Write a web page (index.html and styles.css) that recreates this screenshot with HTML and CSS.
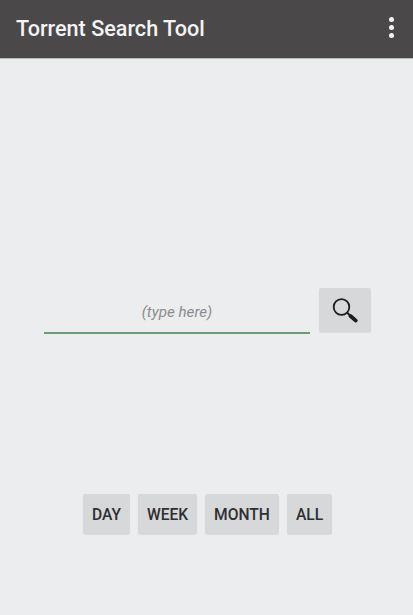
FILE: index.html
```html
<!DOCTYPE html>
<html lang="en">
<head>
    <meta charset="UTF-8" />
    <meta name="viewport" content="width=device-width, initial-scale=1.0"/>
    <title>Torrent Search Tool</title>
    <link rel="stylesheet" href="styles.css">
</head>
<body>
<div class="app">
    <header class="toolbar">
        <h1>Torrent Search Tool</h1>
        <button class="menu-btn" aria-label="More options">
            <span></span><span></span><span></span>
        </button>
    </header>

    <main class="content">
        <div class="search-row">
            <input class="search-input" type="text" placeholder="(type here)">
            <button class="btn search-btn" aria-label="Search">
                <svg width="28" height="28" viewBox="0 0 28 28">
                    <circle cx="10.5" cy="11" r="7.8" fill="none" stroke="#1d1d1f" stroke-width="1.8"/>
                    <path d="M16 16.5 L19.5 20" fill="none" stroke="#1d1d1f" stroke-width="2"/>
                    <path d="M19.5 20 L24.8 24.6" fill="none" stroke="#1d1d1f" stroke-width="3.8" stroke-linecap="round"/>
                </svg>
            </button>
        </div>

        <div class="range-row">
            <button class="btn range-btn">DAY</button>
            <button class="btn range-btn">WEEK</button>
            <button class="btn range-btn">MONTH</button>
            <button class="btn range-btn">ALL</button>
        </div>
    </main>
</div>
</body>
</html>
```

FILE: styles.css
```css
* {
    box-sizing: border-box;
}

body {
    margin: 0;
    font-family: Roboto, 'Liberation Sans', sans-serif;
    background: #ebedef;
}

.app {
    display: flex;
    flex-direction: column;
    height: 100vh;
    overflow: hidden;
}

.toolbar {
    display: flex;
    align-items: center;
    justify-content: space-between;
    height: 59px;
    padding: 0 19px 0 16px;
    background: #4a4849;
    border-bottom: 1px solid #b9b9ba;
}

.toolbar h1 {
    margin: 0 0 2px;
    font-size: 21.6px;
    font-weight: 500;
    color: #f4f4f4;
}

.menu-btn {
    display: flex;
    flex-direction: column;
    gap: 3px;
    margin: 0 0 3px;
    padding: 0;
    border: none;
    background: none;
}

.menu-btn span {
    width: 5px;
    height: 5px;
    border-radius: 50%;
    background: #f4f4f4;
}

.content {
    flex: 1;
    display: flex;
    flex-direction: column;
    align-items: center;
}

.search-row {
    display: flex;
    align-items: flex-start;
    gap: 9px;
    align-self: flex-start;
    margin: 229px 0 0 44px;
}

.search-input {
    width: 266px;
    height: 46px;
    margin: 0;
    padding: 3px 0 0;
    border: none;
    border-bottom: 2px solid #6c9d74;
    background: none;
    outline: none;
    font-family: inherit;
    font-size: 15.2px;
    font-style: italic;
    text-align: center;
}

.search-input::placeholder {
    color: #8b8c8e;
    opacity: 1;
}

.btn {
    border: none;
    border-radius: 2px;
    background: #d6d8d9;
    color: #2f2e31;
    box-shadow: 0 1px 1px rgba(0, 0, 0, 0.08);
}

.search-btn {
    display: flex;
    align-items: center;
    justify-content: center;
    width: 52px;
    height: 44px;
    padding: 0;
}

.range-row {
    display: flex;
    gap: 8px;
    margin: 160px 0 0 2px;
}

.range-btn {
    height: 40px;
    padding: 2px 9px 0;
    font-family: inherit;
    font-size: 15.6px;
    font-weight: 500;
}
```
